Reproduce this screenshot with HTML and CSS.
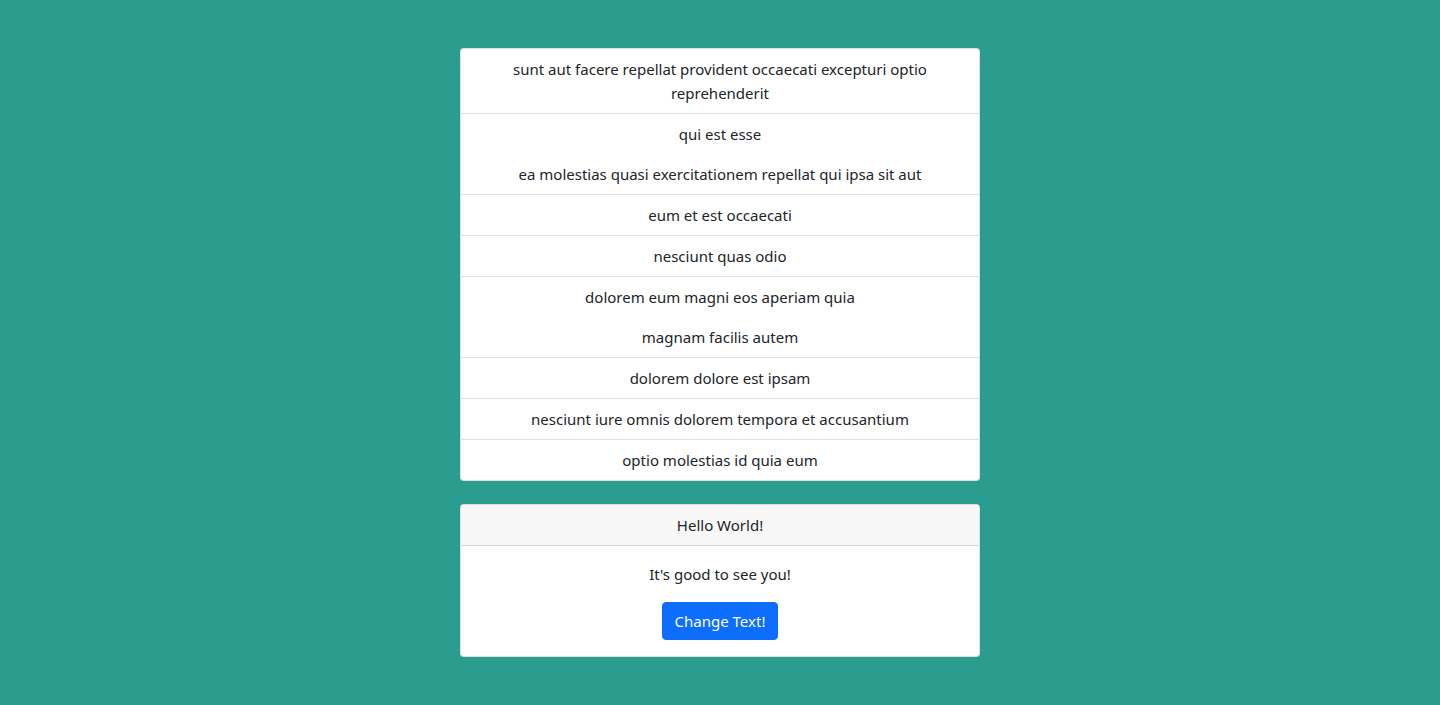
FILE: index.html
```html
<!DOCTYPE html>
<html lang="en">
<head>
<meta charset="utf-8">
<title>Posts</title>
<link rel="stylesheet" href="styles.css">
</head>
<body>
<main class="page">
  <section class="card">
    <ul class="list">
      <li class="item">sunt aut facere repellat provident occaecati excepturi optio reprehenderit</li>
      <li class="item">qui est esse</li>
      <li class="item joined">ea molestias quasi exercitationem repellat qui ipsa sit aut</li>
      <li class="item">eum et est occaecati</li>
      <li class="item">nesciunt quas odio</li>
      <li class="item">dolorem eum magni eos aperiam quia</li>
      <li class="item joined">magnam facilis autem</li>
      <li class="item">dolorem dolore est ipsam</li>
      <li class="item">nesciunt iure omnis dolorem tempora et accusantium</li>
      <li class="item">optio molestias id quia eum</li>
    </ul>
  </section>
  <section class="card">
    <header class="card-header">Hello World!</header>
    <div class="card-body">
      <p class="card-text">It's good to see you!</p>
      <button class="btn" type="button">Change Text!</button>
    </div>
  </section>
</main>
</body>
</html>
```

FILE: styles.css
```css
* { box-sizing: border-box; }
html, body {
  margin: 0;
  padding: 0;
}
body {
  background: #2a9d8f;
  font-family: "Noto Sans", "Open Sans", sans-serif;
  font-size: 15px;
  line-height: 24px;
  color: #212529;
  min-height: 705px;
}
.page {
  width: 520px;
  margin: 0 auto;
  padding-top: 48px;
  display: flex;
  flex-direction: column;
  gap: 23px;
}
.card {
  background: #fff;
  border: 1px solid rgba(0, 0, 0, 0.125);
  border-radius: 4px;
  overflow: hidden;
  text-align: center;
}
.list {
  list-style: none;
  margin: 0;
  padding: 0;
}
.item {
  padding: 8px 16px;
  border-top: 1px solid rgba(0, 0, 0, 0.125);
}
.item:first-child { border-top: 0; }
.item.joined { border-top: 0; }
.card-header {
  background: #f7f7f7;
  padding: 8px 16px;
  border-bottom: 1px solid rgba(0, 0, 0, 0.125);
}
.card-body {
  padding: 16px;
}
.card-text {
  margin: 0 0 16px;
}
.btn {
  font: inherit;
  line-height: 24px;
  color: #fff;
  background: #0d6efd;
  border: 1px solid #0d6efd;
  border-radius: 4px;
  padding: 6px 12px;
  cursor: pointer;
}
```
